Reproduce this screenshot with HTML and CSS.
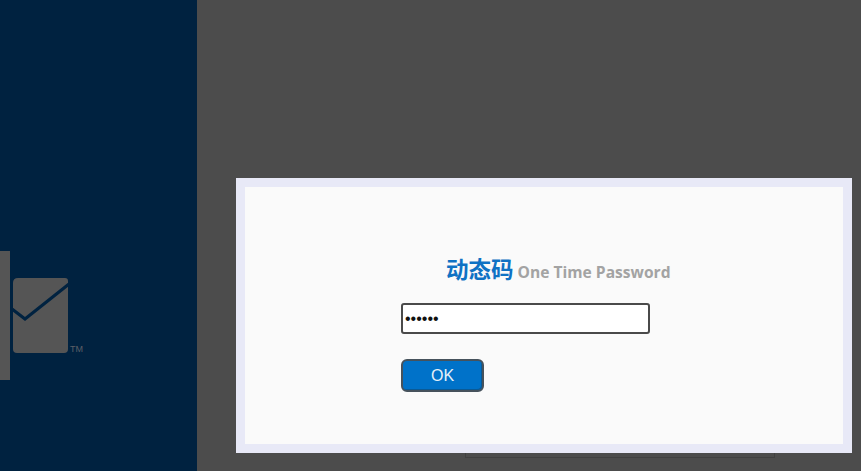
FILE: index.html
```html
<!DOCTYPE html>
<html lang="zh-CN">
<head>
<meta charset="UTF-8">
<meta name="viewport" content="width=device-width, initial-scale=1.0">
<title>One Time Password</title>
<link rel="stylesheet" href="styles.css">
</head>
<body>
<div class="page">
    <aside class="sidebar">
        <div class="logo">
            <svg class="logo-mark" width="70" height="130" viewBox="0 0 70 130">
                <rect x="0" y="0" width="10" height="129" fill="#555555"/>
                <path d="M13 32 Q13 27 18 27 H65 Q68 27 68 30 V98 Q68 102 64 102 H17 Q13 102 13 98 Z" fill="#555555"/>
                <path d="M12 58 L25 68 L69 33" fill="none" stroke="#002240" stroke-width="3.2"/>
            </svg>
            <span class="logo-tm">TM</span>
        </div>
    </aside>
    <main class="content">
        <div class="backdrop-panel"></div>
        <div class="dialog">
            <form class="otp-form">
                <h1 class="otp-title"><span class="otp-title-cn">动态码</span> One Time Password</h1>
                <input class="otp-input" type="password" value="123456">
                <button class="otp-btn" type="button">OK</button>
            </form>
        </div>
    </main>
</div>
</body>
</html>
```

FILE: styles.css
```css
html, body {
    margin: 0;
    height: 100%;
    overflow: hidden;
}
body {
    font-family: 'Open Sans', 'Noto Sans CJK SC', sans-serif;
    background-color: #4c4c4c;
}
.page {
    display: flex;
    height: 471px;
}
.sidebar {
    width: 197px;
    flex-shrink: 0;
    padding-top: 251px;
    box-sizing: border-box;
    background-color: #002240;
}
.logo {
    display: flex;
    align-items: flex-end;
    height: 130px;
}
.logo-mark {
    display: block;
    flex-shrink: 0;
}
.logo-tm {
    margin: 0 0 27px 0;
    font-family: 'Liberation Sans', sans-serif;
    font-size: 9px;
    line-height: 9px;
    color: #5c5f66;
}
.content {
    position: relative;
    flex: 1;
    padding: 178px 9px 18px 39px;
    box-sizing: border-box;
}
.backdrop-panel {
    position: absolute;
    left: 268px;
    top: 440px;
    width: 310px;
    height: 18px;
    box-sizing: border-box;
    border: 1px solid #404040;
}
.dialog {
    position: relative;
    height: 275px;
    box-sizing: border-box;
    border: 9px solid #e8e9f7;
    background-color: #fafafa;
}
.otp-form {
    display: flex;
    flex-direction: column;
    align-items: flex-start;
    padding: 66px 0 0 156px;
}
.otp-title {
    margin: 0 0 16px 45px;
    font-size: 15.6px;
    line-height: 30px;
    font-weight: 700;
    color: #a3a3a3;
    white-space: nowrap;
}
.otp-title-cn {
    font-family: 'Noto Sans CJK SC', sans-serif;
    font-size: 22.5px;
    color: #0f72c4;
}
.otp-input {
    width: 249px;
    height: 31px;
    box-sizing: border-box;
    padding: 0 2px;
    margin-bottom: 25px;
    border: 2px solid #4a4a4a;
    border-radius: 3px;
    background-color: #fff;
    font-size: 16px;
    color: #111;
    outline: none;
}
.otp-btn {
    width: 83px;
    height: 33px;
    padding: 0;
    border: 2px solid #46525c;
    border-radius: 6px;
    background-color: #0072c9;
    box-shadow: inset -1px -1px 0 #0a5a96;
    font-family: 'Liberation Sans', sans-serif;
    font-size: 16px;
    color: #e6f0f8;
}
```
